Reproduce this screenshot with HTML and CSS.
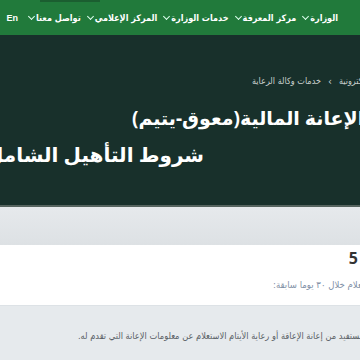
FILE: index.html
```html
<!DOCTYPE html>
<html lang="ar" dir="rtl">
<head>
	<meta charset="utf-8">
	<title>خدمة الاستعلام عن تفاصيل الإعانة المالية</title>
	<link rel="stylesheet" href="styles.css">
</head>
<body>
	<div class="nav">
		<span class="tab"></span>
		<a class="item">الوزارة<i class="chev"></i></a>
		<a class="item">مركز المعرفة<i class="chev"></i></a>
		<a class="item">خدمات الوزارة<i class="chev"></i></a>
		<a class="item">المركز الإعلامي<i class="chev"></i></a>
		<a class="item">تواصل معنا<i class="chev"></i></a>
		<a class="item lang">En</a>
	</div>

	<div class="hero">
		<div class="crumbs">
			<span>الخدمات الإلكترونية</span>
			<span class="sep">&rsaquo;</span>
			<span>خدمات وكالة الرعاية</span>
		</div>
		<div class="title"><h1>خدمة الاستعلام عن تفاصيل الإعانة المالية(معوق-يتيم)</h1></div>
		<div class="ticker">شروط التأهيل الشامل الجديدة</div>
	</div>

	<div class="band"></div>

	<div class="stats">
		<div class="count"><b>5</b><i class="ico"></i></div>
		<div class="since"><span>عدد مرات الاستعلام خلال ٣٠ يوما سابقة:</span></div>
	</div>

	<div class="about">
		<p>تتيح هذه الخدمة للمستفيد من إعانة الإعاقة أو رعاية الأيتام الاستعلام عن معلومات الإعانة التي تقدم له.</p>
	</div>
</body>
</html>
```

FILE: styles.css
```css
*{padding:0; margin:0; box-sizing:border-box;}
body{width:360px; height:360px; overflow:hidden; background:#fff; font-family:"Noto Sans","DejaVu Sans",sans-serif; direction:rtl;}

/* top menu */
.nav{height:35px; background:#217a3b; display:flex; align-items:center; gap:7px; padding-right:22px; position:relative; font-family:"DejaVu Sans Condensed","DejaVu Sans",sans-serif;}
.nav .tab{position:absolute; left:40px; top:0; width:60px; height:2px; background:#1b5e30;}
.item{color:#fff; font-size:9px; font-weight:bold; white-space:nowrap; display:flex; align-items:center; gap:2px;}
.chev{display:inline-block; width:5px; height:5px; border-right:1px solid #dfe; border-bottom:1px solid #dfe; transform:rotate(45deg); margin-top:-3px;}
.lang{font-family:"Liberation Sans",sans-serif; font-size:9px; margin-right:4px;}

/* dark header: texts run past the frame, so they are pinned by their left end */
.hero{height:172px; background:#18302b; border-bottom:2px solid #56645f; padding-top:41px; overflow:hidden;}
.crumbs{display:flex; justify-content:flex-end; gap:7px; font-size:9px; color:#c9d1ce; white-space:nowrap; padding-left:252px; font-family:"DejaVu Sans Condensed","DejaVu Sans",sans-serif;}
.crumbs span{flex-shrink:0;}
.crumbs .sep{font-size:11px; line-height:12px;}
.title{display:flex; justify-content:flex-end; padding-left:132px; margin-top:17px;}
.title h1{color:#fff; font-size:19px; font-weight:bold; white-space:nowrap; flex-shrink:0;}
.ticker{color:#fff; font-size:20px; font-weight:bold; white-space:nowrap; margin-top:10px; margin-right:156px;}

.band{height:38px; background:linear-gradient(#e6e9ec,#dde1e4);}

/* counter */
.stats{height:60px; padding-top:4px; overflow:hidden;}
.count{display:flex; align-items:center; gap:2px; margin-right:-6px; height:18px;}
.count b{font-size:16px; color:#333;}
.ico{display:inline-block; width:6px; height:12px; background:#7a5a26; order:-1;}
.since{display:flex; justify-content:flex-end; padding-left:273px; margin-top:12px; font-family:"DejaVu Sans Condensed","DejaVu Sans",sans-serif;}
.since span{font-size:9.5px; color:#8090a6; white-space:nowrap; flex-shrink:0;}

.about{height:60px; background:#e6eaed; border-top:1px solid #dde2e6; padding-top:24px; padding-left:78px; display:flex; justify-content:flex-end; overflow:hidden; font-family:"DejaVu Sans Condensed","DejaVu Sans",sans-serif;}
.about p{font-size:9.2px; color:#5a5f66; white-space:nowrap; flex-shrink:0;}
```
